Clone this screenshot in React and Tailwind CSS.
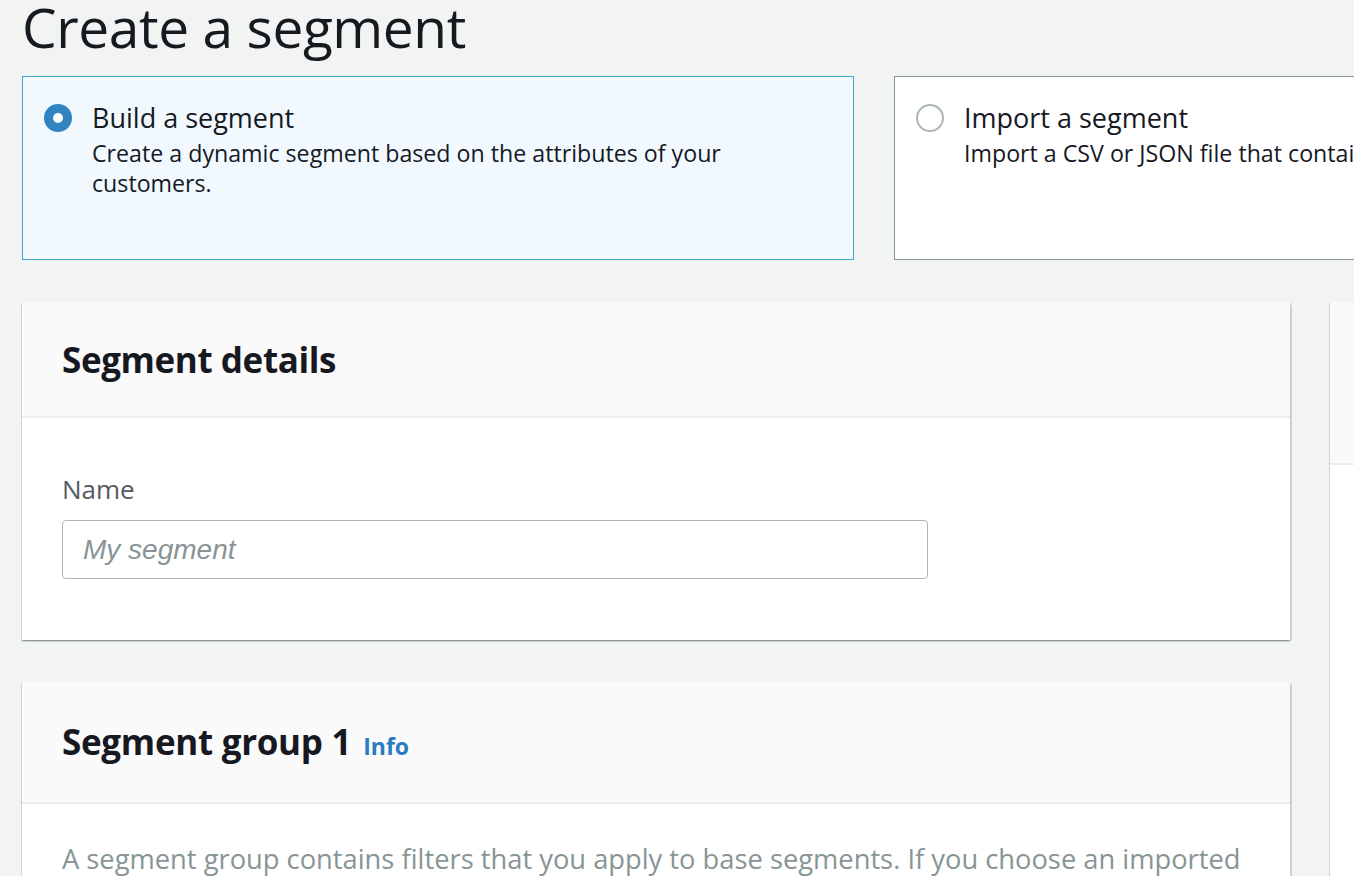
export default function App() {
  const font = { fontFamily: '"Open Sans", "Noto Sans", sans-serif' };
  const panelShadow =
    "bg-white shadow-[0_1.5px_1.5px_0_rgba(0,28,36,0.35),1.5px_1px_1px_0_rgba(0,28,36,0.12),-1.5px_1px_1px_0_rgba(0,28,36,0.12)]";
  return (
    <div
      className="w-[1354px] h-[876px] overflow-hidden bg-[#f2f3f3] text-[#16191f]"
      style={font}
    >
      <div className="w-[2000px] pl-[22px]">
        {/* Page title */}
        <h1 className="text-[55px] leading-[54px] font-normal tracking-[-0.4px]">
          Create a segment
        </h1>

        {/* Creation method tiles */}
        <div className="flex gap-[40px] mt-[22px]">
          <div className="w-[832px] h-[184px] border-[1.5px] border-[#44a4cc] bg-[#f1f9ff] flex pl-[21px] pt-[25px]">
            <div className="w-[28px] h-[28px] mt-[2px] rounded-full border-[9px] border-[#3184c2] bg-white shrink-0"></div>
            <div className="ml-[20px]">
              <div className="text-[27px] leading-[32px]">Build a segment</div>
              <div className="text-[23.2px] leading-[30px] mt-[4px] w-[700px]">
                Create a dynamic segment based on the attributes of your customers.
              </div>
            </div>
          </div>
          <div className="w-[832px] h-[184px] border-[1.5px] border-[#879596] bg-white flex pl-[21px] pt-[25px]">
            <div className="w-[28px] h-[28px] mt-[2px] rounded-full border-[2px] border-[#aab7b8] bg-white shrink-0"></div>
            <div className="ml-[20px]">
              <div className="text-[27px] leading-[32px]">Import a segment</div>
              <div className="text-[23.2px] leading-[30px] mt-[4px] whitespace-nowrap">
                Import a CSV or JSON file that contains endpoint data.
              </div>
            </div>
          </div>
        </div>

        {/* Main + side columns */}
        <div className="flex gap-[40px] mt-[42px] items-start">
          <div className="w-[1268px] flex flex-col gap-[42px]">
            <section className={panelShadow}>
              <div className="h-[116px] bg-[#fafafa] border-b-2 border-[#eaeded] flex items-center px-[40px]">
                <h2 className="text-[35px] font-bold tracking-[-0.4px] mt-[2px]">Segment details</h2>
              </div>
              <div className="px-[40px] pt-[56px] pb-[61px]">
                <label className="block text-[26px] leading-[30px] text-[#545b64]">Name</label>
                <div className="mt-[16px] w-[866px] h-[59px] border-[1.5px] border-[#aab7b8] rounded-[4px] flex items-center px-[20px]">
                  <span
                    className="italic text-[28px] text-[#879596]"
                    style={{ fontFamily: '"Liberation Sans", Arial, sans-serif' }}
                  >
                    My segment
                  </span>
                </div>
              </div>
            </section>

            <section className={panelShadow}>
              <div className="h-[122px] bg-[#fafafa] border-b-2 border-[#eaeded] flex items-center px-[40px]">
                <h2 className="text-[35px] font-bold tracking-[-0.3px]">Segment group 1</h2>
                <a className="ml-[12px] mt-[8px] text-[23px] font-bold text-[#2a7bbf]">Info</a>
              </div>
              <div className="px-[40px] pt-[36px] pb-[40px]">
                <p className="text-[27.3px] leading-[38px] text-[#879596] w-[1200px]">
                  A segment group contains filters that you apply to base segments. If you choose an imported
                  segment as the base segment, the filters in the segment group apply to that segment.
                </p>
              </div>
            </section>
          </div>

          <aside className={"w-[600px] " + panelShadow}>
            <div className="h-[163px] bg-[#fafafa] border-b-2 border-[#eaeded] px-[40px] flex items-center">
              <h2 className="text-[35px] font-bold">Segment estimate</h2>
            </div>
            <div className="h-[600px]"></div>
          </aside>
        </div>
      </div>
    </div>
  );
}
